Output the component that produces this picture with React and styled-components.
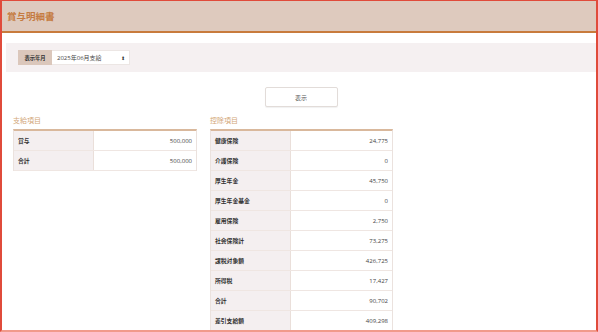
import React from 'react';
import styled, { createGlobalStyle } from 'styled-components';

const GlobalStyle = createGlobalStyle`
  html, body {
    margin: 0;
    padding: 0;
    background: #fff;
  }
  body {
    font-family: "Open Sans", "Noto Sans CJK JP", sans-serif;
    color: #333;
  }
`;

const Frame = styled.div`
  box-sizing: border-box;
  width: 598px;
  height: 332px;
  overflow: hidden;
  border: 2px solid #e04b3b;
  border-top-width: 1px;
  border-bottom-color: #f19a8b;
  background: #fff;
`;

const Header = styled.header`
  height: 30px;
  background: #decabe;
  border-bottom: 2px solid #c87b3c;
  display: flex;
  align-items: center;
  padding-left: 5px;
`;

const Title = styled.h1`
  margin: 0;
  font-size: 9.5px;
  font-weight: 700;
  color: #c57b40;
  font-family: "Noto Sans CJK JP", sans-serif;
`;

const FilterBar = styled.div`
  margin: 10px 0 0 4px;
  height: 29px;
  background: #f5f0f1;
  display: flex;
  align-items: center;
  padding-left: 12px;
`;

const FilterLabel = styled.div`
  height: 15px;
  width: 34px;
  background: #dbc7bb;
  display: flex;
  align-items: center;
  justify-content: center;
  font-size: 5.3px;
  font-weight: 700;
  color: #333;
  font-family: "Noto Sans CJK JP", sans-serif;
`;

const Select = styled.div`
  box-sizing: border-box;
  height: 15px;
  width: 78px;
  background: #fff;
  border: 1px solid #ece6e4;
  border-left: none;
  display: flex;
  align-items: center;
  justify-content: space-between;
  padding: 0 4px 0 5px;
  font-size: 6px;
  color: #444;
  font-family: "Open Sans", "Noto Sans CJK JP", sans-serif;
`;

const Arrows = styled.span`
  font-size: 5px;
  color: #333;
`;

const ButtonRow = styled.div`
  display: flex;
  justify-content: center;
  margin-top: 15px;
  padding-left: 4px;
`;

const Button = styled.button`
  box-sizing: border-box;
  width: 73px;
  height: 20px;
  background: #fff;
  border: 1px solid #e2dcd9;
  border-radius: 2px;
  box-shadow: 0 1px 1px rgba(0, 0, 0, 0.06);
  font-size: 6px;
  color: #555;
  font-family: "Noto Sans CJK JP", sans-serif;
  padding: 0;
`;

const Columns = styled.div`
  display: flex;
  align-items: flex-start;
  gap: 13px;
  margin: 9px 0 0 11px;
`;

const Section = styled.section`
  width: ${p => p.width}px;
`;

const SectionTitle = styled.h2`
  margin: 0 0 4px;
  height: 9px;
  font-size: 7px;
  line-height: 9px;
  font-weight: 400;
  color: #d2a677;
  font-family: "Noto Sans CJK JP", sans-serif;
`;

const Table = styled.div`
  border-top: 2px solid #d9b89c;
  border-left: 1px solid #ebe2de;
  border-right: 1px solid #ebe2de;
`;

const Row = styled.div`
  display: grid;
  grid-template-columns: ${p => p.labelWidth}px 1fr;
  height: 20px;
  box-sizing: border-box;
  border-bottom: 1px solid #efe6e2;
`;

const LabelCell = styled.div`
  background: #f4eff0;
  border-right: 1px solid #eadfda;
  display: flex;
  align-items: center;
  padding-left: 4px;
  font-size: 5.8px;
  font-weight: 700;
  color: #333;
  font-family: "Noto Sans CJK JP", sans-serif;
`;

const ValueCell = styled.div`
  display: flex;
  align-items: center;
  justify-content: flex-end;
  padding-right: 4px;
  font-size: 6px;
  color: #444;
  font-family: "Open Sans", sans-serif;
`;

const payments = [
  ['賞与', '500,000'],
  ['合計', '500,000'],
];

const deductions = [
  ['健康保険', '24,775'],
  ['介護保険', '0'],
  ['厚生年金', '45,750'],
  ['厚生年金基金', '0'],
  ['雇用保険', '2,750'],
  ['社会保険計', '73,275'],
  ['課税対象額', '426,725'],
  ['所得税', '17,427'],
  ['合計', '90,702'],
  ['差引支給額', '409,298'],
];

function ItemTable({ title, items, width, labelWidth }) {
  return <Section width={width}>
    <SectionTitle>{title}</SectionTitle>
    <Table>
      {items.map(([label, value], idx) => (
        <Row key={label + idx} labelWidth={labelWidth}>
          <LabelCell>{label}</LabelCell>
          <ValueCell>{value}</ValueCell>
        </Row>
      ))}
    </Table>
  </Section>
}

export default function App() {
  return <>
    <GlobalStyle />
    <Frame>
      <Header>
        <Title>賞与明細書</Title>
      </Header>
      <FilterBar>
        <FilterLabel>表示年月</FilterLabel>
        <Select>
          <span>2025年06月支給</span>
          <Arrows>⬍</Arrows>
        </Select>
      </FilterBar>
      <ButtonRow>
        <Button>表示</Button>
      </ButtonRow>
      <Columns>
        <ItemTable title="支給項目" items={payments} width={184} labelWidth={80} />
        <ItemTable title="控除項目" items={deductions} width={183} labelWidth={80} />
      </Columns>
    </Frame>
  </>
}
